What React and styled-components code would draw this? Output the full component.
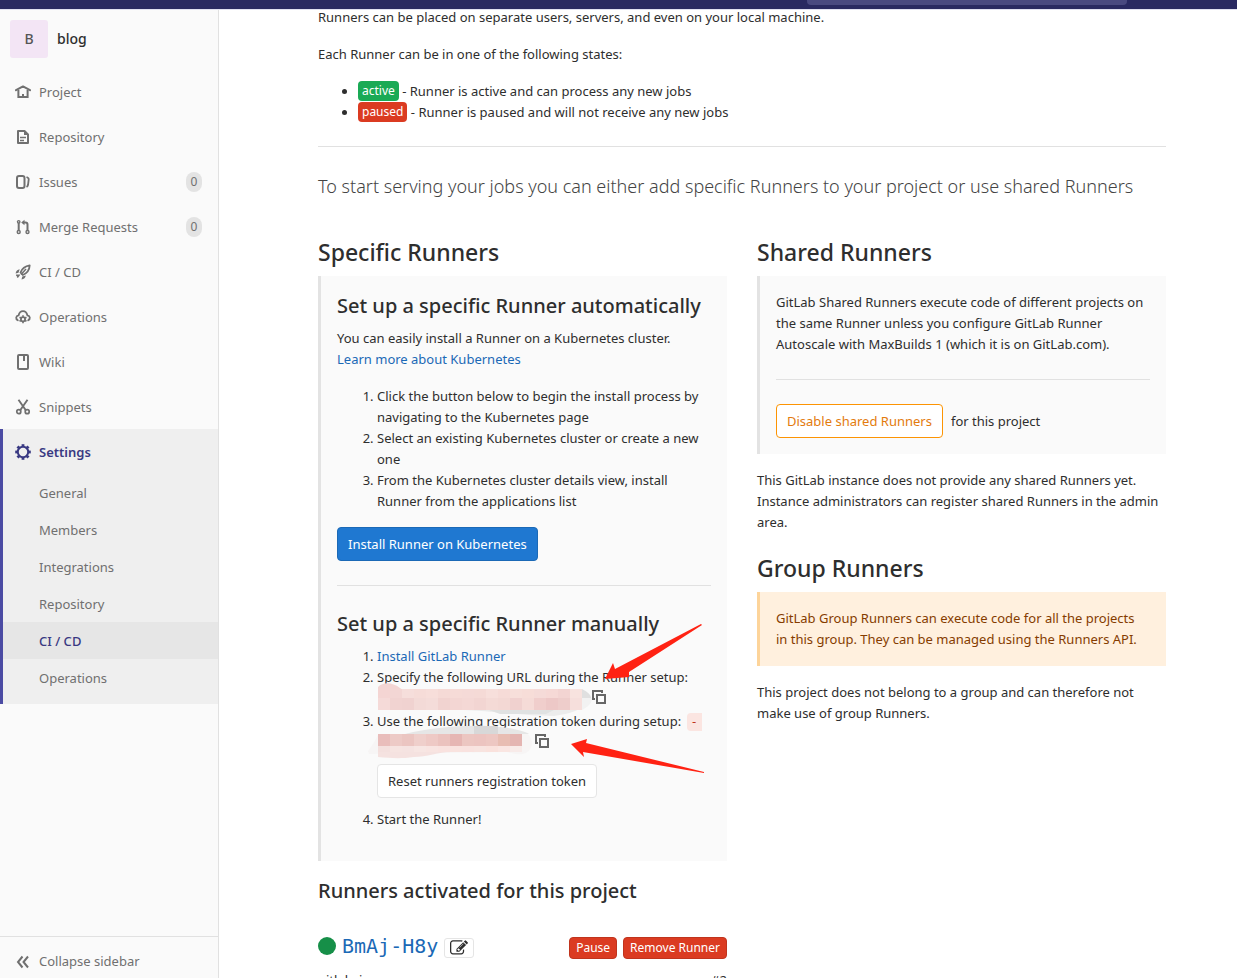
import React from 'react';
import styled, { createGlobalStyle, css } from 'styled-components';

const GlobalStyle = createGlobalStyle`
  * { box-sizing: border-box; }
  body {
    margin: 0;
    background: #fff;
    color: #2e2e2e;
    font: 400 13px/21px "Noto Sans", "Open Sans", sans-serif;
  }
  button, input { font: inherit; }
  a { color: #1b69b6; text-decoration: none; }
`;

/* ---------- Shell ---------- */

const Page = styled.div`
  height: 100vh;
  display: flex;
  overflow: hidden;
`;

const TopBar = styled.header`
  position: fixed;
  top: 0;
  left: 0;
  right: 0;
  z-index: 2;
  height: 10px;
  padding: 0 110px 4px 0;
  display: flex;
  justify-content: flex-end;
  align-items: flex-end;
  overflow: hidden;
  background: #292961;
  border-bottom: 1px solid #dfdff0;
`;

const SearchInput = styled.input`
  flex: none;
  width: 320px;
  height: 32px;
  border: 0;
  border-radius: 4px;
  background: #494980;
  color: #fff;
`;

/* ---------- Sidebar ---------- */

const Sidebar = styled.nav`
  flex: none;
  width: 219px;
  padding-top: 10px;
  display: flex;
  flex-direction: column;
  background: #fafafa;
  border-right: 1px solid #e1e1e1;
`;

const ProjectHeader = styled.a`
  height: 59px;
  padding: 0 10px 2px;
  display: flex;
  align-items: center;
  gap: 9px;
  color: #2e2e2e;
  font-weight: 500;
  font-size: 14px;
`;

const Avatar = styled.span`
  width: 38px;
  height: 38px;
  display: flex;
  align-items: center;
  justify-content: center;
  border-radius: 3px;
  background: #f3e5f5;
  color: #555;
`;

const NavList = styled.ul`
  margin: 0;
  padding: 0;
  list-style: none;
`;

const NavLink = styled.a`
  height: 45px;
  padding: 1px 16px 0 15px;
  display: flex;
  align-items: center;
  gap: 8px;
  color: #707070;
  ${(p) => p.$active && css`
    padding-left: 12px;
    color: #393982;
    font-weight: 600;
  `}
  svg { flex: none; }
`;

const Count = styled.span`
  margin-left: auto;
  width: 16px;
  height: 20px;
  border-radius: 8px;
  background: #e3e3e3;
  font-size: 12px;
  line-height: 20px;
  text-align: center;
`;

const ActiveGroup = styled.li`
  background: #efefef;
  border-left: 3px solid #4b4ba3;
`;

const SubList = styled(NavList)`
  padding-bottom: 8px;
`;

const SubLink = styled.a`
  display: block;
  height: 37px;
  padding-left: 36px;
  line-height: 38px;
  color: #707070;
  ${(p) => p.$active && css`
    background: #e6e6e6;
    color: #393982;
    font-weight: 500;
  `}
`;

const CollapseButton = styled.button`
  margin-top: auto;
  height: 42px;
  padding: 8px 16px 0 15px;
  display: flex;
  align-items: center;
  gap: 8px;
  border: 0;
  border-top: 1px solid #e1e1e1;
  background: transparent;
  color: #707070;
`;

/* ---------- Content ---------- */

const Main = styled.main`
  flex: 1;
  min-width: 0;
  padding: 7px 71px 0 99px;
`;

const Text = styled.p`
  margin: 0 0 16px;
`;

const StateList = styled.ul`
  margin: 0;
  padding-left: 40px;
`;

const StateLabel = styled.span`
  display: inline-block;
  height: 20px;
  padding: 0 4px;
  border-radius: 4px;
  background: ${(p) => (p.$paused ? '#db3b21' : '#1aaa55')};
  color: #fff;
  font-size: 12px;
  line-height: 20px;
  vertical-align: top;
`;

const Divider = styled.hr`
  height: 1px;
  margin: ${(p) => (p.$wide ? '23px' : '24px')} 0;
  border: 0;
  background: #e1e1e1;
`;

const Lead = styled.p`
  margin: 0 0 15px;
  color: #444;
  font-size: 18px;
  font-weight: 350;
  line-height: 32px;
`;

const Columns = styled.div`
  display: grid;
  grid-template-columns: 1fr 1fr;
  gap: 30px;
`;

const Column = styled.section`
  min-width: 0;
`;

const Title = styled.h4`
  margin: 19px 0 8px;
  font-size: 23px;
  font-weight: 500;
  line-height: 32px;
`;

const Subtitle = styled.h5`
  margin: 0 0 8px;
  font-size: 20px;
  font-weight: 500;
  line-height: 28px;
`;

const Callout = styled.div`
  margin-bottom: 16px;
  padding: 16px;
  border-left: 3px solid ${(p) => (p.$warning ? '#fdd49a' : '#e3e3e3')};
  background: ${(p) => (p.$warning ? '#fff0de' : '#fafafa')};
  color: ${(p) => (p.$warning ? '#853c00' : 'inherit')};
  p:last-child { margin-bottom: 0; }
`;

const Steps = styled.ol`
  margin: 0;
  padding: 0 0 15px 40px;
`;

const Manual = styled.div`
  position: relative;
`;

const Button = styled.button`
  height: 34px;
  padding: 0 10px;
  border: 1px solid #e5e5e5;
  border-radius: 4px;
  background: #fff;
  color: #2e2e2e;
  line-height: 32px;
  ${(p) => p.$kind === 'primary' && css`
    border-color: #1b69b6;
    background: #1f78d1;
    color: #fff;
  `}
  ${(p) => p.$kind === 'warning' && css`
    border-color: #fc9403;
    color: #e37b0d;
  `}
  ${(p) => p.$kind === 'danger' && css`
    height: 22px;
    margin-top: 4px;
    padding: 0 6px;
    border-color: #c0341d;
    background: #db3b21;
    color: #fff;
    font-size: 12px;
    line-height: 20px;
  `}
`;

const ResetRow = styled.div`
  padding: 9px 0 11px;
`;

const InlineAction = styled.div`
  display: flex;
  align-items: center;
  gap: 8px;
`;

const SecretLine = styled.div`
  height: 23px;
  display: flex;
  align-items: flex-start;
`;

const Secret = styled.svg`
  flex: none;
  margin-left: -8px;
  overflow: visible;
`;

const IconButton = styled.button`
  display: flex;
  margin-top: 2px;
  padding: 0;
  border: 0;
  background: transparent;
  color: #666;
`;

const Code = styled.code`
  margin-left: 2px;
  padding: 2px 4px;
  border-radius: 4px 0 0 4px;
  background: #fbe5e1;
  color: #c0341d;
  font: 12px/15px "DejaVu Sans Mono", monospace;
`;

const Arrows = styled.svg`
  position: absolute;
  top: 0;
  left: 0;
  pointer-events: none;
`;

const RunnerRow = styled.div`
  height: 30px;
  margin-top: 26px;
  display: flex;
  align-items: center;
  gap: 6px;
`;

const StatusDot = styled.span`
  width: 18px;
  height: 18px;
  border-radius: 50%;
  background: #168f48;
`;

const RunnerName = styled.a`
  font: 20px/30px "DejaVu Sans Mono", monospace;
`;

const EditButton = styled.button`
  width: 30px;
  height: 20px;
  margin: 4px auto 0 0;
  padding: 0;
  display: flex;
  align-items: center;
  justify-content: center;
  border: 1px solid #e5e5e5;
  border-radius: 3px;
  background: #fff;
  color: #2e2e2e;
`;

const RunnerMeta = styled.div`
  margin-top: 9px;
  display: flex;
  justify-content: space-between;
`;

/* ---------- Icons ---------- */

const Icon = ({ children }) => (
  <svg width="16" height="16" viewBox="0 0 16 16" fill="none" stroke="currentColor" strokeWidth="2" aria-hidden="true">
    {children}
  </svg>
);

const gearTeeth = [0, 45, 90, 135, 180, 225, 270, 315];

const icons = {
  home: (
    <>
      <path d="M1 6.200 8 2.400l7 3.800" strokeLinecap="round" strokeLinejoin="round" />
      <path d="M3.400 6v7h9.200V6" />
      <path d="M8 13v-3" />
    </>
  ),
  doc: (
    <>
      <path d="M3 2h6.500L13 5.500V14H3z" strokeLinejoin="round" />
      <path d="M9 1.500V6h4.500z" fill="currentColor" stroke="none" />
      <path d="M5 8.500h6M5 11.500h4" strokeWidth="1.500" />
    </>
  ),
  issues: (
    <>
      <rect x="2" y="2" width="7.500" height="12" rx="2" />
      <path d="M11.500 3c1.500.6 2.500 1 2.200 2.500l-.7 5.500c-.2 1-.6 1.500-1.500 2" strokeWidth="1.800" />
    </>
  ),
  merge: (
    <>
      <circle cx="3.700" cy="2.800" r="1.200" strokeWidth="1.400" />
      <circle cx="3.700" cy="13" r="1.500" strokeWidth="1.400" />
      <circle cx="12.500" cy="13" r="1.500" strokeWidth="1.400" />
      <path d="M3.700 4v7.500M8 3.500h2.500c1.300 0 2 .7 2 2v6" />
      <path d="M9.500.7v5.600L6.200 3.500z" fill="currentColor" stroke="none" />
    </>
  ),
  rocket: (
    <>
      <path d="M5.500 8.500C7 4.500 10 2 14.700 1.300 14.500 6 12 9.300 7.800 11z" strokeWidth="1.800" strokeLinejoin="round" />
      <path d="M11 5 6 10.500" strokeWidth="1.500" />
      <path d="M4.700 5.300C2.500 5.500 1 7 .6 9.500L3.500 8.700zM10.800 11.500c-.3 2.200-1.800 3.500-4.300 4l.8-3z" fill="currentColor" stroke="none" />
      <path d="M4.500 10.500 2.300 13.500M2.500 10.500l-1 1.500" strokeWidth="1.500" />
    </>
  ),
  cloud: (
    <>
      <path d="M2.800 11.300C.5 10 .6 6.800 3.600 6.300 4.300 3.500 6 2.200 8 2.200s3.700 1.300 4.400 4.100c3 .5 3.100 3.700.8 5" strokeWidth="1.800" strokeLinecap="round" />
      <circle cx="8" cy="10.300" r="2.100" strokeWidth="1.800" />
      {[0, 60, 120, 180, 240, 300].map((a) => (
        <path key={a} d="M8 7.800V6.300" strokeWidth="1.600" transform={`rotate(${a} 8 10.300)`} />
      ))}
    </>
  ),
  book: (
    <>
      <rect x="3" y="1" width="10" height="14" rx="1" />
      <path d="M9 1v6" />
    </>
  ),
  scissors: (
    <>
      <circle cx="3.800" cy="12.700" r="2" strokeWidth="1.700" />
      <circle cx="12.200" cy="12.700" r="2" strokeWidth="1.700" />
      <path d="m3.500.8 7.300 10.500M12.500.8 5.200 11.300" strokeWidth="1.900" />
    </>
  ),
  gear: (
    <>
      <circle cx="8" cy="8" r="5.200" />
      {gearTeeth.map((a) => (
        <path key={a} d="M8 2.500V.2" strokeWidth="2.800" transform={`rotate(${a} 8 8)`} />
      ))}
    </>
  ),
  collapse: <path d="M7.500 2.500 3 8l4.500 5.500M13 2.500 8.500 8l4.500 5.500" />,
};

const CopyIcon = () => (
  <svg width="14" height="14" viewBox="0 0 14 14" fill="none" stroke="currentColor" strokeWidth="2" aria-hidden="true">
    <path d="M3 9H1V1h9v2" />
    <path d="M5 5h8v8H5z" />
  </svg>
);

const EditIcon = () => (
  <svg width="18" height="18" viewBox="0 0 1792 1792" fill="currentColor" aria-hidden="true">
    <path d="M888 1184l116-116-152-152-116 116v56h96v96h56zm440-720q-16-16-33 1l-350 350q-17 17-1 33t33-1l350-350q17-17 1-33zm80 594v190q0 119-84.500 203.500t-203.500 84.500h-832q-119 0-203.500-84.500t-84.500-203.500v-832q0-119 84.500-203.500t203.500-84.500h832q63 0 117 25 15 7 18 23 3 17-9 29l-49 49q-14 14-32 8-23-6-45-6h-832q-66 0-113 47t-47 113v832q0 66 47 113t113 47h832q66 0 113-47t47-113v-126q0-13 9-22l64-64q15-15 35-7t20 29zm-96-738l288 288-672 672h-288v-288zm444 132l-92 92-288-288 92-92q28-28 68-28t68 28l152 152q28 28 28 68t-28 68z" />
  </svg>
);

/* ---------- Blurred-out values ---------- */

const urlTop = ['#f4d5d3', '#f3d6d4', '#f6dedb', '#f6dcd8', '#f7deda', '#f5dad6', '#f6dbd7', '#f5dad7', '#f5dad6', '#f7dfdb', '#f6dbd7', '#f7dfda', '#f7ddd8', '#f5dbd8', '#f6d9d6', '#f3d4d2', '#f8e3df'];
const urlBottom = ['#f5dad8', '#f1d3d1', '#f0d2d0', '#f3dad7', '#f4dcd9', '#f1d3d0', '#f3d6d3', '#f4d8d5', '#f2d5d2', '#f4dad6', '#f3d8d4', '#f0d1cf', '#f5dbd7', '#f0cecc', '#edc8c7', '#eecdcb', '#f6dfdc'];
const tokenTop = ['#e9bdbb', '#edcac6', '#ebc5c1', '#efcfcb', '#eec9c5', '#ebc2be', '#e6b6b3', '#ecc6c1', '#ecc4c0', '#edc7c2', '#e8bdb2', '#e4b5b2'];
const tokenBottom = ['#f4e0de', '#f6e4e1', '#f5e3e1', '#f7e6e3', '#f8e4e1', '#f9e2df', '#f9e3df', '#f9e2df', '#f8e4e0', '#fae2dd', '#fae6e2', '#f8ebe9'];

const Cells = ({ colors, y, height }) =>
  colors.map((fill, i) => <rect key={i} x={9 + i * 12} y={y} width="12" height={height} fill={fill} />);

const HiddenUrl = () => (
  <Secret width="223" height="23" viewBox="0 0 223 23" role="img" aria-label="Hidden URL">
    <path d="M9 20c40 3 70 0 104 3s50 5 72 5c16-2 28-7 32-12 3-6 2-10-5-14H9z" fill="#ececec" />
    <path d="M120 22h65l-8 4h-46z" fill="#e0e2e2" />
    <path d="M9 10V-1c5-5 14-5 22 1l3 2v8z" fill="#f3d5d3" />
    <Cells colors={urlTop} y={1} height={9} />
    <Cells colors={urlBottom} y={10} height={12} />
    <path d="M213 1c6 3 9 6 9 9h-9z" fill="#e0e0e0" />
    <path d="M213 10h10c0 5-4 9-10 12z" fill="#f2f2f2" />
  </Secret>
);

const HiddenToken = () => (
  <Secret width="166" height="23" viewBox="0 0 166 23" role="img" aria-label="Hidden token">
    <path d="M-1 19C4 12 8 6 9 2h150c5 6 6 14-2 19-6 3-14 0-20-1L0 22z" fill="#f7f5f5" />
    <path d="M36 2C60-4 90-7 118-6c20 1 36 4 42 8z" fill="#e6e6e6" />
    <path d="M105-6h24v8h-24z" fill="#d8d8d8" />
    <Cells colors={tokenTop} y={2} height={12} />
    <Cells colors={tokenBottom} y={14} height={6} />
    <path d="M9 20h72c-10 0-24 5-36 5-14 2-24 1-36 0z" fill="#f5e2e0" />
  </Secret>
);

const navItems = [
  { icon: 'home', label: 'Project' },
  { icon: 'doc', label: 'Repository' },
  { icon: 'issues', label: 'Issues', count: 0 },
  { icon: 'merge', label: 'Merge Requests', count: 0 },
  { icon: 'rocket', label: 'CI / CD' },
  { icon: 'cloud', label: 'Operations' },
  { icon: 'book', label: 'Wiki' },
  { icon: 'scissors', label: 'Snippets' },
];

const settingsItems = ['General', 'Members', 'Integrations', 'Repository', 'CI / CD', 'Operations'];

export default function App() {
  return (
    <>
      <GlobalStyle />
      <TopBar>
        <SearchInput type="search" aria-label="Search" />
      </TopBar>
      <Page>
        <Sidebar>
          <ProjectHeader href="#">
            <Avatar>B</Avatar>
            blog
          </ProjectHeader>
          <NavList>
            {navItems.map(({ icon, label, count }) => (
              <li key={label}>
                <NavLink href="#">
                  <Icon>{icons[icon]}</Icon>
                  {label}
                  {count !== undefined && <Count>{count}</Count>}
                </NavLink>
              </li>
            ))}
            <ActiveGroup>
              <NavLink href="#" $active>
                <Icon>{icons.gear}</Icon>
                Settings
              </NavLink>
              <SubList>
                {settingsItems.map((label) => (
                  <li key={label}>
                    <SubLink href="#" $active={label === 'CI / CD'}>{label}</SubLink>
                  </li>
                ))}
              </SubList>
            </ActiveGroup>
          </NavList>
          <CollapseButton type="button">
            <Icon>{icons.collapse}</Icon>
            Collapse sidebar
          </CollapseButton>
        </Sidebar>

        <Main>
          <Text>Runners can be placed on separate users, servers, and even on your local machine.</Text>
          <Text>Each Runner can be in one of the following states:</Text>
          <StateList>
            <li><StateLabel>active</StateLabel> - Runner is active and can process any new jobs</li>
            <li><StateLabel $paused>paused</StateLabel> - Runner is paused and will not receive any new jobs</li>
          </StateList>
          <Divider $wide />
          <Lead>To start serving your jobs you can either add specific Runners to your project or use shared Runners</Lead>

          <Columns>
            <Column>
              <Title>Specific Runners</Title>
              <Callout>
                <Subtitle>Set up a specific Runner automatically</Subtitle>
                <Text>
                  You can easily install a Runner on a Kubernetes cluster.
                  <br />
                  <a href="#">Learn more about Kubernetes</a>
                </Text>
                <Steps>
                  <li>Click the button below to begin the install process by navigating to the Kubernetes page</li>
                  <li>Select an existing Kubernetes cluster or create a new one</li>
                  <li>From the Kubernetes cluster details view, install Runner from the applications list</li>
                </Steps>
                <Button type="button" $kind="primary">Install Runner on Kubernetes</Button>
                <Divider />
                <Manual>
                  <Subtitle>Set up a specific Runner manually</Subtitle>
                  <Steps>
                    <li><a href="#">Install GitLab Runner</a></li>
                    <li>
                      Specify the following URL during the Runner setup:
                      <SecretLine>
                        <HiddenUrl />
                        <IconButton type="button" aria-label="Copy URL"><CopyIcon /></IconButton>
                      </SecretLine>
                    </li>
                    <li>
                      Use the following registration token during setup: <Code>-</Code>
                      <SecretLine>
                        <HiddenToken />
                        <IconButton type="button" aria-label="Copy token"><CopyIcon /></IconButton>
                      </SecretLine>
                      <ResetRow>
                        <Button type="button">Reset runners registration token</Button>
                      </ResetRow>
                    </li>
                    <li>Start the Runner!</li>
                  </Steps>
                  <Arrows width="374" height="180" viewBox="0 0 374 180" fill="#ff2213" aria-hidden="true">
                    <path d="M268 69l8-16 2 6 86-45 1 1-73 47 0 5z" />
                    <path d="M234 134l16-5-1 4 118 29v1l-121-21 1 5z" />
                  </Arrows>
                </Manual>
              </Callout>

              <Subtitle>Runners activated for this project</Subtitle>
              <RunnerRow>
                <StatusDot />
                <RunnerName href="#">BmAj-H8y</RunnerName>
                <EditButton type="button" aria-label="Edit runner"><EditIcon /></EditButton>
                <Button type="button" $kind="danger">Pause</Button>
                <Button type="button" $kind="danger">Remove Runner</Button>
              </RunnerRow>
              <RunnerMeta>
                <span>gitlabci</span>
                <span>#2</span>
              </RunnerMeta>
            </Column>

            <Column>
              <Title>Shared Runners</Title>
              <Callout>
                <Text>
                  GitLab Shared Runners execute code of different projects on the same Runner unless you configure GitLab Runner Autoscale with MaxBuilds 1 (which it is on GitLab.com).
                </Text>
                <Divider />
                <InlineAction>
                  <Button type="button" $kind="warning">Disable shared Runners</Button>
                  for this project
                </InlineAction>
              </Callout>
              <Text>
                This GitLab instance does not provide any shared Runners yet. Instance administrators can register shared Runners in the admin area.
              </Text>
              <Title>Group Runners</Title>
              <Callout $warning>
                <Text>
                  GitLab Group Runners can execute code for all the projects
                  <br />
                  in this group. They can be managed using the Runners API.
                </Text>
              </Callout>
              <Text>This project does not belong to a group and can therefore not make use of group Runners.</Text>
            </Column>
          </Columns>
        </Main>
      </Page>
    </>
  );
}
